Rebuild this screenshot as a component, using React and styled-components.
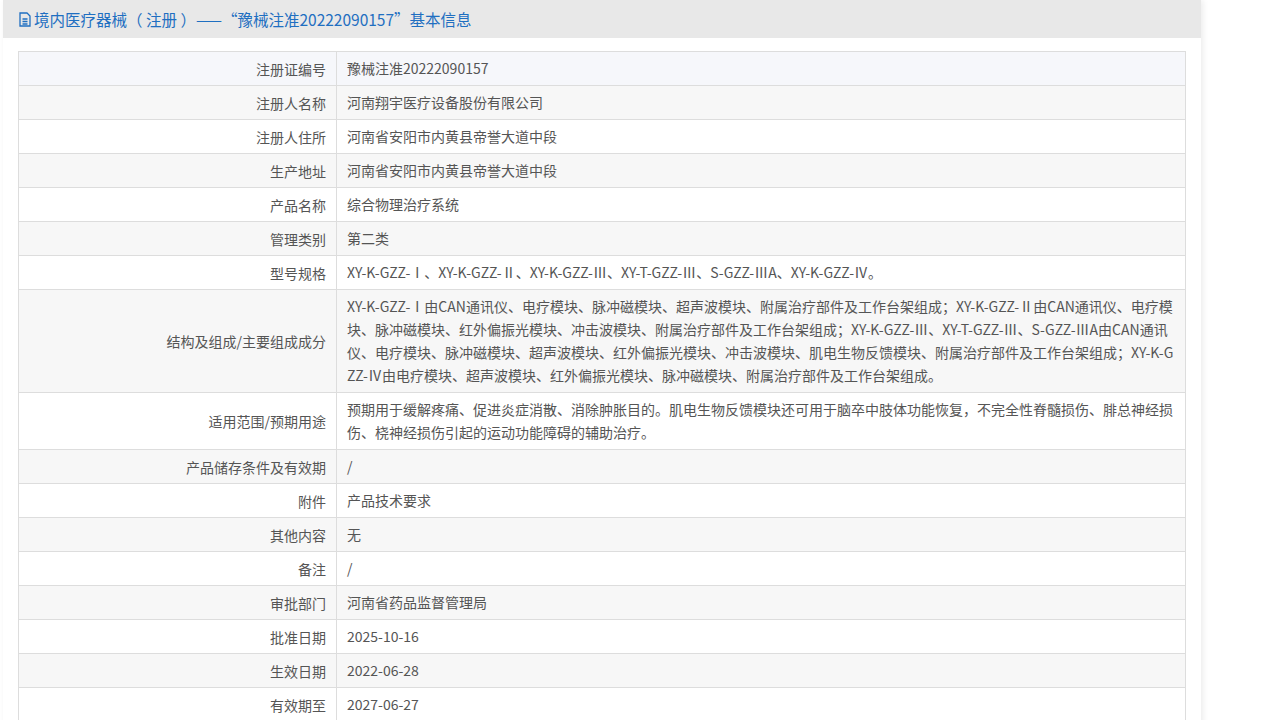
import React from "react";
import styled, { createGlobalStyle } from "styled-components";

const G = createGlobalStyle`
  body { margin: 0; background: #fff; font-family: "Microsoft YaHei", "Noto Sans CJK SC", sans-serif; }
`;
const Panel = styled.div`
  width: 1198px; margin-left: 3px; background: #fff;
  box-shadow: 2px 0 6px rgba(0,0,0,0.08); padding-bottom: 20px;
`;
const Header = styled.div`
  height: 38px; background: #e8e8e8; display: flex; align-items: center;
  padding-left: 15px; color: #1f6fc1; font-size: 15.5px; gap: 2px;
`;
const Wrap = styled.div` padding: 13px 15px 0 15px; `;
const Table = styled.table`
  width: 1168px; border-collapse: collapse; border: 1px solid #ccc; font-size: 14px; color: #555;
`;
const Tr = styled.tr` background: ${p => p.$bg}; `;
const Th = styled.td`
  width: 297px; text-align: right; padding: 5px 10px; border: 1px solid #ddd; line-height: 22px; vertical-align: middle;
`;
const Td = styled.td` padding: 5px 10px; border: 1px solid #ddd; line-height: 23px; word-break: break-all; `;

const rows = [
  ["注册证编号", "豫械注准20222090157"],
  ["注册人名称", "河南翔宇医疗设备股份有限公司"],
  ["注册人住所", "河南省安阳市内黄县帝誉大道中段"],
  ["生产地址", "河南省安阳市内黄县帝誉大道中段"],
  ["产品名称", "综合物理治疗系统"],
  ["管理类别", "第二类"],
  ["型号规格", "XY-K-GZZ-Ⅰ、XY-K-GZZ-Ⅱ、XY-K-GZZ-Ⅲ、XY-T-GZZ-Ⅲ、S-GZZ-ⅢA、XY-K-GZZ-Ⅳ。"],
  ["结构及组成/主要组成成分", "XY-K-GZZ-Ⅰ由CAN通讯仪、电疗模块、脉冲磁模块、超声波模块、附属治疗部件及工作台架组成；XY-K-GZZ-Ⅱ由CAN通讯仪、电疗模块、脉冲磁模块、红外偏振光模块、冲击波模块、附属治疗部件及工作台架组成；XY-K-GZZ-Ⅲ、XY-T-GZZ-Ⅲ、S-GZZ-ⅢA由CAN通讯仪、电疗模块、脉冲磁模块、超声波模块、红外偏振光模块、冲击波模块、肌电生物反馈模块、附属治疗部件及工作台架组成；XY-K-GZZ-Ⅳ由电疗模块、超声波模块、红外偏振光模块、脉冲磁模块、附属治疗部件及工作台架组成。"],
  ["适用范围/预期用途", "预期用于缓解疼痛、促进炎症消散、消除肿胀目的。肌电生物反馈模块还可用于脑卒中肢体功能恢复，不完全性脊髓损伤、腓总神经损伤、桡神经损伤引起的运动功能障碍的辅助治疗。"],
  ["产品储存条件及有效期", "/"],
  ["附件", "产品技术要求"],
  ["其他内容", "无"],
  ["备注", "/"],
  ["审批部门", "河南省药品监督管理局"],
  ["批准日期", "2025-10-16"],
  ["生效日期", "2022-06-28"],
  ["有效期至", "2027-06-27"],
];

const Icon = () => (
  <svg width="14" height="15" viewBox="0 0 14 15" fill="none" stroke="#1f6fc1" strokeWidth="1.3">
    <path d="M2 1h7l3 3v10H2z" />
    <path d="M4.5 7h5M4.5 9.5h5M4.5 12h5" />
  </svg>
);

export default function App() {
  return (
    <>
      <G />
      <Panel>
        <Header><Icon />境内医疗器械（ 注册 ）——“豫械注准20222090157”基本信息</Header>
        <Wrap>
          <Table>
            <tbody>
              {rows.map(([k, v], i) => (
                <Tr key={k} $bg={i === 0 ? "#f6f7fb" : i % 2 ? "#f7f7f7" : "#fff"}>
                  <Th>{k}</Th>
                  <Td>{v}</Td>
                </Tr>
              ))}
            </tbody>
          </Table>
        </Wrap>
      </Panel>
    </>
  );
}
